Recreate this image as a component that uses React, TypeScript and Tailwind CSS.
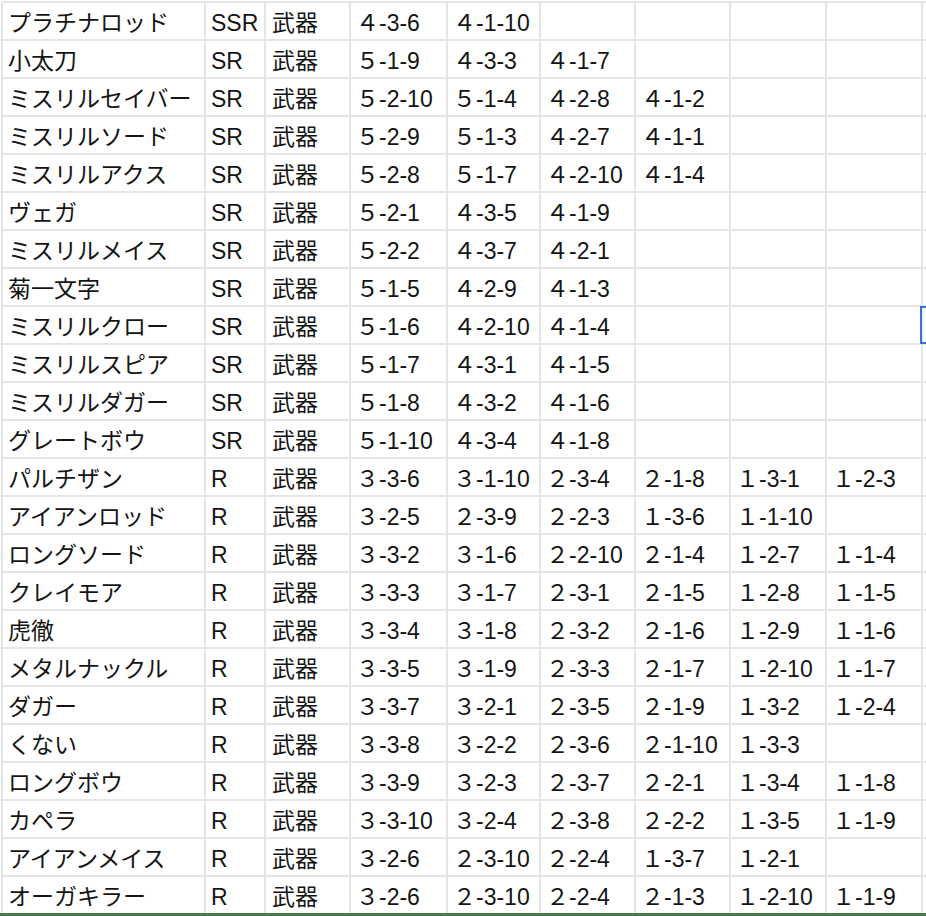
import React from "react";

type Row = [string, string, string, ...string[]];

const rows: Row[] = [
  ["プラチナロッド", "SSR", "武器", "4-3-6", "4-1-10"],
  ["小太刀", "SR", "武器", "5-1-9", "4-3-3", "4-1-7"],
  ["ミスリルセイバー", "SR", "武器", "5-2-10", "5-1-4", "4-2-8", "4-1-2"],
  ["ミスリルソード", "SR", "武器", "5-2-9", "5-1-3", "4-2-7", "4-1-1"],
  ["ミスリルアクス", "SR", "武器", "5-2-8", "5-1-7", "4-2-10", "4-1-4"],
  ["ヴェガ", "SR", "武器", "5-2-1", "4-3-5", "4-1-9"],
  ["ミスリルメイス", "SR", "武器", "5-2-2", "4-3-7", "4-2-1"],
  ["菊一文字", "SR", "武器", "5-1-5", "4-2-9", "4-1-3"],
  ["ミスリルクロー", "SR", "武器", "5-1-6", "4-2-10", "4-1-4"],
  ["ミスリルスピア", "SR", "武器", "5-1-7", "4-3-1", "4-1-5"],
  ["ミスリルダガー", "SR", "武器", "5-1-8", "4-3-2", "4-1-6"],
  ["グレートボウ", "SR", "武器", "5-1-10", "4-3-4", "4-1-8"],
  ["パルチザン", "R", "武器", "3-3-6", "3-1-10", "2-3-4", "2-1-8", "1-3-1", "1-2-3"],
  ["アイアンロッド", "R", "武器", "3-2-5", "2-3-9", "2-2-3", "1-3-6", "1-1-10"],
  ["ロングソード", "R", "武器", "3-3-2", "3-1-6", "2-2-10", "2-1-4", "1-2-7", "1-1-4"],
  ["クレイモア", "R", "武器", "3-3-3", "3-1-7", "2-3-1", "2-1-5", "1-2-8", "1-1-5"],
  ["虎徹", "R", "武器", "3-3-4", "3-1-8", "2-3-2", "2-1-6", "1-2-9", "1-1-6"],
  ["メタルナックル", "R", "武器", "3-3-5", "3-1-9", "2-3-3", "2-1-7", "1-2-10", "1-1-7"],
  ["ダガー", "R", "武器", "3-3-7", "3-2-1", "2-3-5", "2-1-9", "1-3-2", "1-2-4"],
  ["くない", "R", "武器", "3-3-8", "3-2-2", "2-3-6", "2-1-10", "1-3-3"],
  ["ロングボウ", "R", "武器", "3-3-9", "3-2-3", "2-3-7", "2-2-1", "1-3-4", "1-1-8"],
  ["カペラ", "R", "武器", "3-3-10", "3-2-4", "2-3-8", "2-2-2", "1-3-5", "1-1-9"],
  ["アイアンメイス", "R", "武器", "3-2-6", "2-3-10", "2-2-4", "1-3-7", "1-2-1"],
  ["オーガキラー", "R", "武器", "3-2-6", "2-3-10", "2-2-4", "2-1-3", "1-2-10", "1-1-9"],
];

// the sheet shows the leading digit as a full-width character
const wide = (code: string) =>
  String.fromCharCode(code.charCodeAt(0) + 0xfee0) + code.slice(1);

const COLS = 10;

export default function App() {
  return (
    <div
      className="relative w-[926px] h-[916px] overflow-hidden bg-white text-[#141414]"
      style={{ fontFamily: '"Liberation Sans", "Noto Sans CJK JP", sans-serif' }}
    >
      <div className="ml-[1px] mt-[1px] border-l-2 border-t-2 border-[#e5e5e5] grid grid-cols-[203px_60px_85px_97px_93px_95px_95px_96px_96px_60px] w-[1000px]">
        {rows.map((row, r) =>
          Array.from({ length: COLS }).map((_, c) => {
            let text = row[c] ?? "";
            if (c >= 3 && text) text = wide(text);
            const selected = r === 8 && c === 9;
            return (
              <div
                key={`${r}-${c}`}
                className={`relative h-[38px] border-r-2 border-b-2 border-[#e5e5e5] flex items-center pt-[4px] whitespace-nowrap text-[23px] leading-none ${
                  c >= 3 ? "pl-[5px]" : c === 2 ? "pl-[6px]" : "pl-[5px]"
                }`}
              >
                {text}
                {selected && (
                  <div className="absolute -left-[3px] -top-[1px] -bottom-[1px] right-0 border-2 border-[#3a72d8]" />
                )}
              </div>
            );
          })
        )}
      </div>
      <div className="absolute left-0 right-0 bottom-0 h-[3px] bg-[#457a4d]" />
    </div>
  );
}
